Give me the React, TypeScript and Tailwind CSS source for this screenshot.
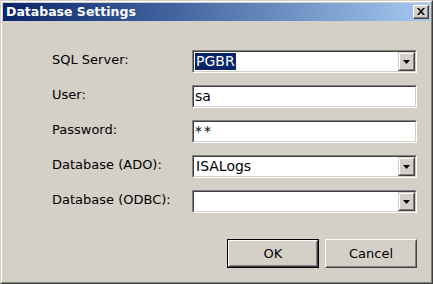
import React from 'react'

const font = "font-['DejaVu_Sans',sans-serif]"

function Sunken({ children }: { children?: React.ReactNode }) {
  return (
    <div className="h-[23px] w-[225px] border border-t-[#808080] border-l-[#808080] border-r-white border-b-white">
      <div className="flex h-full border border-t-[#404040] border-l-[#404040] border-r-[#d4d0c8] border-b-[#d4d0c8] bg-white">
        {children}
      </div>
    </div>
  )
}

function DropButton() {
  return (
    <div className="h-full w-[17px] border border-t-[#d4d0c8] border-l-[#d4d0c8] border-r-[#404040] border-b-[#404040]">
      <div className="flex h-full items-center justify-center border border-t-white border-l-white border-r-[#808080] border-b-[#808080] bg-[#d4d0c8]">
        <svg width="7" height="4" viewBox="0 0 7 4" className="mt-px">
          <path d="M0 0h7L3.5 4z" fill="#000" />
        </svg>
      </div>
    </div>
  )
}

function Edit({ value, masked }: { value: string; masked?: boolean }) {
  return (
    <Sunken>
      <span
        className={
          masked
            ? 'pl-[1px] pt-[1px] text-[14px] leading-[17px] tracking-[2px] text-black'
            : 'pl-[1px] pt-[1px] text-[14px] leading-[17px] text-black'
        }
      >
        {value}
      </span>
    </Sunken>
  )
}

function Combo({ value, selected }: { value: string; selected?: boolean }) {
  return (
    <Sunken>
      <div className="flex flex-1 items-stretch p-px">
        {value && (
          <span
            className={
              selected
                ? 'bg-[#0a246a] px-px text-[14px] leading-[17px] text-white'
                : 'px-px text-[14px] leading-[17px] text-black'
            }
          >
            {value}
          </span>
        )}
      </div>
      <DropButton />
    </Sunken>
  )
}

function Button({ label, isDefault }: { label: string; isDefault?: boolean }) {
  const inner = (
    <div className="h-full border border-t-white border-l-white border-r-[#404040] border-b-[#404040]">
      <div className="flex h-full items-center justify-center border border-t-[#d4d0c8] border-l-[#d4d0c8] border-r-[#808080] border-b-[#808080] text-[13px] text-black">
        {label}
      </div>
    </div>
  )
  return isDefault ? (
    <div className="h-[29px] w-[92px] border border-black">{inner}</div>
  ) : (
    <div className="h-[29px] w-[92px]">{inner}</div>
  )
}

export default function App() {
  const rows: { label: string; field: React.ReactNode }[] = [
    { label: 'SQL Server:', field: <Combo value="PGBR" selected /> },
    { label: 'User:', field: <Edit value="sa" /> },
    { label: 'Password:', field: <Edit value="**" masked /> },
    { label: 'Database (ADO):', field: <Combo value="ISALogs" /> },
    { label: 'Database (ODBC):', field: <Combo value="" /> },
  ]

  return (
    <div className={`${font} h-[284px] w-[433px] border border-t-[#d4d0c8] border-l-[#d4d0c8] border-r-[#404040] border-b-[#404040]`}>
      <div className="flex h-full flex-col border border-t-white border-l-white border-r-[#808080] border-b-[#808080] bg-[#d4d0c8] p-px">
        <div className="flex h-[18px] items-center bg-gradient-to-r from-[#0a246a] to-[#a6caf0] pl-[3px] pr-[1px]">
          <span className="flex-1 text-[12.5px] font-bold leading-none text-white">Database Settings</span>
          <div className="h-[14px] w-[16px] border border-t-white border-l-white border-r-[#404040] border-b-[#404040]">
            <div className="flex h-full items-center justify-center border-r border-b border-r-[#808080] border-b-[#808080] bg-[#d4d0c8]">
              <svg width="8" height="7" viewBox="0 0 8 7">
                <path d="M0 0h2l2 2.5L6 0h2L5 3.5 8 7H6L4 4.5 2 7H0l3-3.5z" fill="#000" />
              </svg>
            </div>
          </div>
        </div>

        <div className="grid grid-cols-[140px_225px] gap-y-[12px] pl-[49px] pt-[29px]">
          {rows.map((r) => (
            <React.Fragment key={r.label}>
              <div className="pt-[2px] text-[13px] leading-[15px] text-black">{r.label}</div>
              {r.field}
            </React.Fragment>
          ))}
        </div>

        <div className="mt-[26px] flex justify-end gap-[6px] pr-[13px]">
          <Button label="OK" isDefault />
          <Button label="Cancel" />
        </div>
      </div>
    </div>
  )
}
